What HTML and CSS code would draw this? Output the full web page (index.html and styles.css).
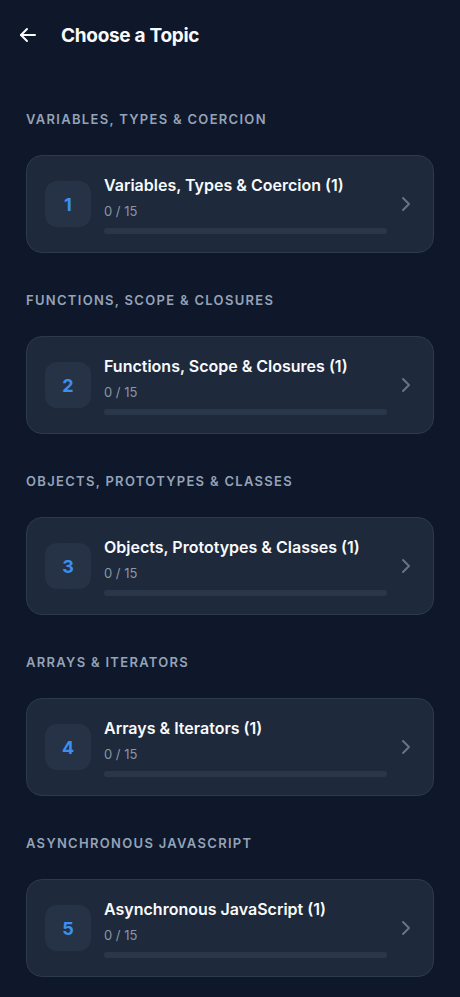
FILE: index.html
```html
<!DOCTYPE html>
<html>
<head>
  <title>Choose a Topic</title>
  <link rel="stylesheet" href="styles.css">
</head>
<body>
  <header class="top-bar">
    <button class="back-btn" aria-label="Back">
      <svg width="20" height="20" viewBox="0 0 20 20" fill="none" stroke="currentColor" stroke-width="2" stroke-linecap="round" stroke-linejoin="round">
        <path d="M17 10H3" />
        <path d="M9 4l-6 6 6 6" />
      </svg>
    </button>
    <h1>Choose a Topic</h1>
  </header>

  <main class="topics">
    <section class="topic-group">
      <h2 class="group-label">Variables, Types &amp; Coercion</h2>
      <div class="topic-card">
        <div class="badge">1</div>
        <div class="topic-info">
          <div class="topic-title">Variables, Types &amp; Coercion (1)</div>
          <div class="topic-count">0 / 15</div>
          <div class="track"><div class="fill" style="width: 0%"></div></div>
        </div>
        <svg class="chevron" width="12" height="16" viewBox="0 0 12 16" fill="none" stroke="currentColor" stroke-width="2" stroke-linecap="round" stroke-linejoin="round"><path d="M4 2l6 6-6 6" /></svg>
      </div>
    </section>

    <section class="topic-group">
      <h2 class="group-label">Functions, Scope &amp; Closures</h2>
      <div class="topic-card">
        <div class="badge">2</div>
        <div class="topic-info">
          <div class="topic-title">Functions, Scope &amp; Closures (1)</div>
          <div class="topic-count">0 / 15</div>
          <div class="track"><div class="fill" style="width: 0%"></div></div>
        </div>
        <svg class="chevron" width="12" height="16" viewBox="0 0 12 16" fill="none" stroke="currentColor" stroke-width="2" stroke-linecap="round" stroke-linejoin="round"><path d="M4 2l6 6-6 6" /></svg>
      </div>
    </section>

    <section class="topic-group">
      <h2 class="group-label">Objects, Prototypes &amp; Classes</h2>
      <div class="topic-card">
        <div class="badge">3</div>
        <div class="topic-info">
          <div class="topic-title">Objects, Prototypes &amp; Classes (1)</div>
          <div class="topic-count">0 / 15</div>
          <div class="track"><div class="fill" style="width: 0%"></div></div>
        </div>
        <svg class="chevron" width="12" height="16" viewBox="0 0 12 16" fill="none" stroke="currentColor" stroke-width="2" stroke-linecap="round" stroke-linejoin="round"><path d="M4 2l6 6-6 6" /></svg>
      </div>
    </section>

    <section class="topic-group">
      <h2 class="group-label">Arrays &amp; Iterators</h2>
      <div class="topic-card">
        <div class="badge">4</div>
        <div class="topic-info">
          <div class="topic-title">Arrays &amp; Iterators (1)</div>
          <div class="topic-count">0 / 15</div>
          <div class="track"><div class="fill" style="width: 0%"></div></div>
        </div>
        <svg class="chevron" width="12" height="16" viewBox="0 0 12 16" fill="none" stroke="currentColor" stroke-width="2" stroke-linecap="round" stroke-linejoin="round"><path d="M4 2l6 6-6 6" /></svg>
      </div>
    </section>

    <section class="topic-group">
      <h2 class="group-label">Asynchronous JavaScript</h2>
      <div class="topic-card">
        <div class="badge">5</div>
        <div class="topic-info">
          <div class="topic-title">Asynchronous JavaScript (1)</div>
          <div class="topic-count">0 / 15</div>
          <div class="track"><div class="fill" style="width: 0%"></div></div>
        </div>
        <svg class="chevron" width="12" height="16" viewBox="0 0 12 16" fill="none" stroke="currentColor" stroke-width="2" stroke-linecap="round" stroke-linejoin="round"><path d="M4 2l6 6-6 6" /></svg>
      </div>
    </section>
  </main>
</body>
</html>
```

FILE: styles.css
```css
body {
  margin: 0;
  background-color: #0f172a;
  color: #f8fafc;
  font-family: Inter, 'Noto Sans', sans-serif;
  height: 997px;
  overflow: hidden;
}

.top-bar {
  display: flex;
  align-items: center;
  gap: 23px;
  height: 70px;
  padding: 0 18px;
}

.back-btn {
  display: flex;
  padding: 0;
  background: none;
  border: none;
  color: #f8fafc;
  cursor: pointer;
}

.top-bar h1 {
  margin: 0;
  font-size: 19px;
  font-weight: 700;
  letter-spacing: -0.3px;
}

.topics {
  padding: 41px 26px 0;
  display: flex;
  flex-direction: column;
  gap: 39px;
}

.group-label {
  margin: 0 0 28px;
  font-size: 13px;
  line-height: 16px;
  font-weight: 600;
  letter-spacing: 1.3px;
  text-transform: uppercase;
  color: #94a3b8;
}

.topic-card {
  display: flex;
  align-items: center;
  height: 98px;
  box-sizing: border-box;
  padding: 0 22px 0 18px;
  background-color: #1e293b;
  border: 1px solid #2c3a50;
  border-radius: 16px;
}

.badge {
  flex: none;
  width: 46px;
  height: 46px;
  border-radius: 12px;
  background-color: #263347;
  color: #3b8ff0;
  font-size: 18px;
  font-weight: 700;
  display: flex;
  align-items: center;
  justify-content: center;
  margin-right: 13px;
}

.topic-info {
  flex: 1;
  padding-top: 1px;
}

.topic-title {
  font-size: 16px;
  line-height: 20px;
  font-weight: 600;
  color: #f8fafc;
}

.topic-count {
  margin-top: 8px;
  font-size: 13px;
  line-height: 16px;
  color: #8a96a8;
}

.track {
  margin-top: 9px;
  height: 6px;
  border-radius: 3px;
  background-color: #2a374b;
  overflow: hidden;
}

.fill {
  height: 100%;
  background-color: #3b82f6;
}

.chevron {
  flex: none;
  margin-left: 12px;
  color: #64748b;
}
```
